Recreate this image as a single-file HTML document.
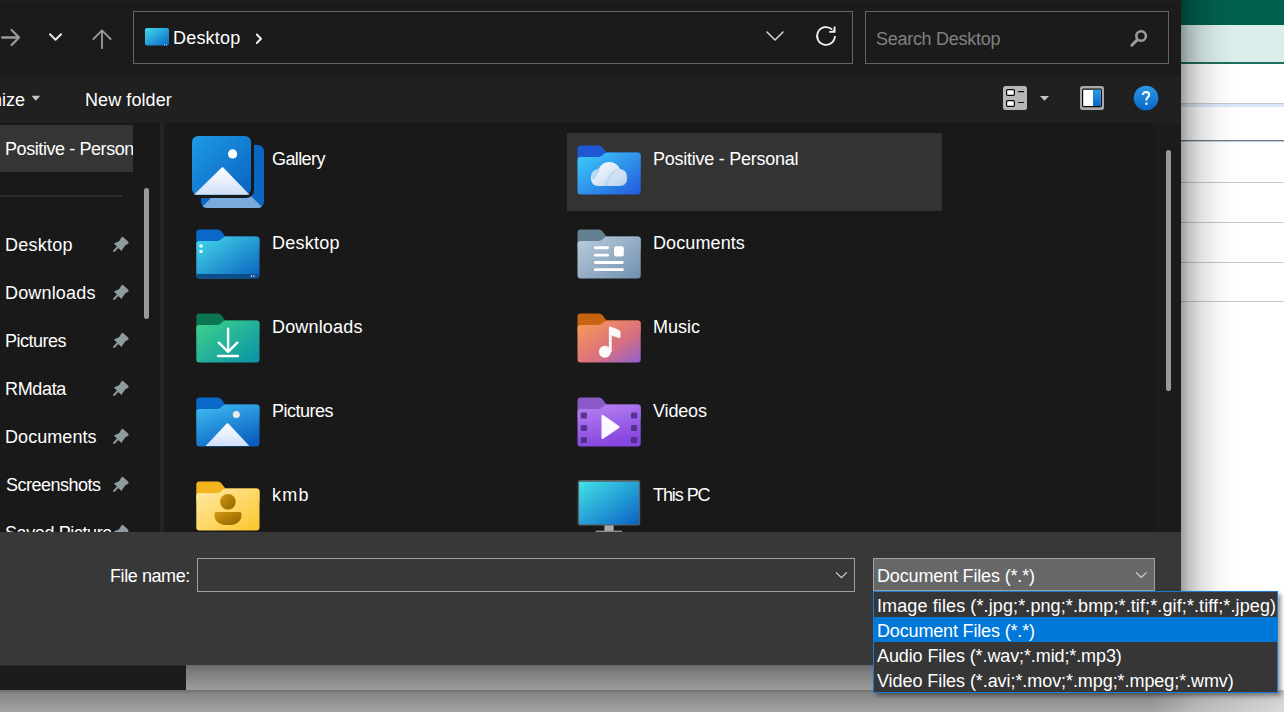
<!DOCTYPE html>
<html><head><meta charset="utf-8">
<style>
*{margin:0;padding:0;box-sizing:border-box}
html,body{width:1284px;height:712px;overflow:hidden;background:#b8b8b8;font-family:"Liberation Sans",sans-serif;}
.a{position:absolute}
.t{position:absolute;font-size:18px;line-height:20px;white-space:nowrap;color:#ffffff}
svg{position:absolute;overflow:visible}
</style></head><body>
<!-- background app at right -->
<div class="a" id="bgapp" style="left:1181px;top:0;width:103px;height:690px;background:#ffffff">
  <div class="a" style="left:0;top:0;width:103px;height:25px;background:#006150"></div>
  <div class="a" style="left:0;top:25px;width:103px;height:37px;background:#dbeeeb"></div>
  <div class="a" style="left:0;top:62px;width:103px;height:2px;background:#1f6e5f"></div>
  <div class="a" style="left:0;top:103px;width:103px;height:1px;background:#c8c8c8"></div><div class="a" style="left:0;top:104px;width:103px;height:3px;background:#d8e8f8"></div>
  <div class="a" style="left:0;top:140px;width:103px;height:1px;background:#6f7880"></div>
  <div class="a" style="left:0;top:141px;width:103px;height:1px;background:#bcd0e0"></div>
  <div class="a" style="left:0;top:182px;width:103px;height:1px;background:#c8c8c8"></div>
  <div class="a" style="left:0;top:222px;width:103px;height:1px;background:#c8c8c8"></div>
  <div class="a" style="left:0;top:262px;width:103px;height:1px;background:#c8c8c8"></div>
  <div class="a" style="left:0;top:301px;width:103px;height:1px;background:#c8c8c8"></div>
  <div class="a" style="left:0;top:0;width:60px;height:690px;background:linear-gradient(90deg,rgba(0,0,0,.38),rgba(0,0,0,.24) 8px,rgba(0,0,0,.12) 20px,rgba(0,0,0,.04) 36px,rgba(0,0,0,0) 55px)"></div>
</div>
<!-- bottom shadow strip -->
<div class="a" style="left:0;top:665px;width:1181px;height:25px;background:linear-gradient(180deg,#6a6a6a,#7c7c7c 6px,#9a9a9a 24px)"></div>
<div class="a" style="left:0;top:690px;width:1284px;height:22px;background:linear-gradient(180deg,#6e6e6e 0,#787878 1.5px,#888888 4px,#a2a2a2 22px)"></div>
<div class="a" style="left:0;top:690px;width:1284px;height:22px;background:linear-gradient(90deg,rgba(255,255,255,0) 0,rgba(255,255,255,0) 1150px,rgba(255,255,255,.3) 1200px,rgba(255,255,255,.6) 1284px)"></div>
<!-- dialog -->
<div class="a" id="dlg" style="left:0;top:0;width:1181px;height:665px;background:#191919;overflow:hidden">
  <!-- top address row -->
  <div class="a" style="left:0;top:0;width:1181px;height:75px;background:#1b1b1b"></div><div class="a" style="left:0;top:0;width:1181px;height:1px;background:#231f20"></div>
  <!-- toolbar -->
  <div class="a" style="left:0;top:75px;width:1181px;height:48px;background:#202020"></div>
  <!-- address box -->
  <div class="a" style="left:133px;top:11px;width:720px;height:53px;border:1px solid #646464"></div>
  <div class="a" style="left:865px;top:11px;width:304px;height:53px;border:1px solid #646464"></div>

  <!-- nav selected -->
  <div class="a" style="left:0;top:125px;width:133px;height:47px;background:#353535"></div>
  <div class="a" style="left:0;top:195px;width:122px;height:2px;background:#2e2e2e"></div>
  <div class="a" style="left:144px;top:188px;width:5px;height:131px;border-radius:3px;background:#9a9a9a"></div>
  <div class="a" style="left:160px;top:123px;width:4px;height:409px;background:#242424"></div><div class="a" style="left:1155px;top:123px;width:26px;height:409px;background:#1b1b1b"></div>

  <!-- content selected -->
  <div class="a" style="left:567px;top:133px;width:375px;height:78px;background:#333333;border-radius:1.5px"></div>
  <div class="a" style="left:1166px;top:150px;width:5px;height:241px;border-radius:3px;background:#9a9a9a"></div>

  <!-- bottom panel -->
  <div class="a" style="left:0;top:532px;width:1181px;height:133px;background:#383838"></div>
  <div class="a" style="left:197px;top:558px;width:658px;height:34px;border:1px solid #a0a0a0"></div>
  <div class="a" style="left:873px;top:558px;width:282px;height:33px;border:1px solid #a2a2a2;background:#676767"></div>
</div>

<div class="a" style="left:0;top:665px;width:186px;height:1px;background:#2c2c2c"></div><div class="a" style="left:0;top:666px;width:186px;height:24px;background:#1c1c1c"></div>

<!-- ICONS -->
<svg width="1284" height="712" viewBox="0 0 1284 712" style="left:0;top:0">
<defs>
  <linearGradient id="gDesk" x1="0" y1="0" x2="1" y2="1"><stop offset="0" stop-color="#46dbe8"/><stop offset="1" stop-color="#0a5fc0"/></linearGradient>
  <linearGradient id="gDl" x1="0" y1="0" x2="1" y2="1"><stop offset="0" stop-color="#40d38a"/><stop offset="1" stop-color="#0892a8"/></linearGradient>
  <linearGradient id="gPic" x1="0.2" y1="0" x2="0.7" y2="1"><stop offset="0" stop-color="#3cb8f0"/><stop offset="1" stop-color="#0a5fbe"/></linearGradient>
  <linearGradient id="gKmb" x1="0" y1="0" x2="1" y2="1"><stop offset="0" stop-color="#ffeaa6"/><stop offset="1" stop-color="#fcc52a"/></linearGradient>
  <linearGradient id="gOd" x1="0" y1="0" x2="1" y2="1"><stop offset="0" stop-color="#3ed0fa"/><stop offset="1" stop-color="#2258dc"/></linearGradient>
  <linearGradient id="gDoc" x1="0" y1="0" x2="1" y2="1"><stop offset="0" stop-color="#bccddc"/><stop offset="1" stop-color="#7090b0"/></linearGradient>
  <linearGradient id="gMus" x1="0" y1="0" x2="1" y2="1"><stop offset="0" stop-color="#fc9c55"/><stop offset=".6" stop-color="#d8707e"/><stop offset="1" stop-color="#9060d0"/></linearGradient>
  <linearGradient id="gVid" x1="0" y1="0" x2="0.3" y2="1"><stop offset="0" stop-color="#b883f2"/><stop offset="1" stop-color="#8646e0"/></linearGradient>
  <linearGradient id="gPc" x1="0" y1="0" x2="1" y2="1"><stop offset="0" stop-color="#42e2e8"/><stop offset="1" stop-color="#0a62c4"/></linearGradient>
  <linearGradient id="gGal" x1="0" y1="0" x2="1" y2="1"><stop offset="0" stop-color="#1e9ae6"/><stop offset="1" stop-color="#0a62c0"/></linearGradient>
  <linearGradient id="gMtn" x1="0" y1="0" x2="0" y2="1"><stop offset="0" stop-color="#ffffff"/><stop offset="1" stop-color="#cfe0f8"/></linearGradient>
  <linearGradient id="gCloud" x1="0" y1="0" x2="1" y2="1"><stop offset="0" stop-color="#ffffff"/><stop offset="1" stop-color="#b8cff0"/></linearGradient>
  <linearGradient id="gPerson" x1="0" y1="0" x2="1" y2="1"><stop offset="0" stop-color="#d09a10"/><stop offset="1" stop-color="#8f6200"/></linearGradient>
  <linearGradient id="gHelp" x1="0" y1="0" x2="0" y2="1"><stop offset="0" stop-color="#2a98e8"/><stop offset="1" stop-color="#0a66c6"/></linearGradient>
  <linearGradient id="gSmallDesk" x1="0" y1="0" x2="1" y2="1"><stop offset="0" stop-color="#40dcea"/><stop offset="1" stop-color="#0a66c6"/></linearGradient>
  <path id="fTab" d="M0,3 Q0,0 3,0 L21.5,0 Q23.5,0 24.8,1.5 L28.2,6 Q29,7 30.6,7 L60.2,7 Q63.2,7 63.2,10 L63.2,20 L0,20 Z"/>
  <path id="fFront" d="M0,14.6 Q0,11.6 3,11.6 L21,11.6 Q22.6,11.6 24,10.5 L27.2,7.9 Q28.4,7 30,7 L60.2,7 Q63.2,7 63.2,10 L63.2,46 Q63.2,49 60.2,49 L3,49 Q0,49 0,46 Z"/>
</defs>

<!-- top nav arrows -->
<g fill="none" stroke-linecap="round" stroke-linejoin="round">
  <path d="M2.2,37.5 H19 M11.6,30 L19,37.5 L11.6,45" stroke="#9a9a9a" stroke-width="2.3"/>
  <path d="M50,34.2 L55.5,39.7 L61,34.2" stroke="#e8e8e8" stroke-width="2"/>
  <path d="M102,30.5 V48.2 M93.4,39 L102,30.4 L110.6,39" stroke="#9a9a9a" stroke-width="1.8"/>
  <path d="M256.8,34.5 L261,38.8 L256.8,43" stroke="#f0f0f0" stroke-width="2"/>
  <path d="M767,32 L775,40 L783,32" stroke="#dadada" stroke-width="1.5"/>
  <path d="M834.9,36 A8.9,8.9 0 1 1 832.2,29.6" stroke="#f2f2f2" stroke-width="1.8" stroke-linecap="butt"/>
  <path d="M829.2,31.8 H834.6 V26.4" fill="none" stroke="#f2f2f2" stroke-width="1.8" stroke-linejoin="miter" stroke-linecap="butt"/><path d="M831.5,31.8 H834.6 V28.7 Z" fill="#f2f2f2"/>
  <circle cx="1141.1" cy="36" r="4.8" stroke="#9c9c9c" stroke-width="2.6"/>
  <path d="M1137.2,39.9 L1131.8,45.2" stroke="#9c9c9c" stroke-width="2.9"/>
</g>
<!-- small desktop icon in address -->
<rect x="145" y="28" width="24" height="17.5" rx="1.8" fill="url(#gSmallDesk)"/>
<rect x="164" y="44.3" width="1" height="1" fill="#ffffff" opacity=".8"/><rect x="166" y="44.3" width="1" height="1" fill="#ffffff" opacity=".8"/>

<!-- toolbar -->
<path d="M31.5,95.8 H40.2 L35.85,100.8 Z" fill="#c8c8c8"/>
<rect x="1003" y="86" width="24" height="24" rx="2.5" fill="#b6b6b6"/>
<rect x="1006.6" y="89.6" width="7.8" height="5.8" rx="1.2" fill="#fff" stroke="#000" stroke-width="1.2"/>
<rect x="1006.6" y="100.6" width="7.8" height="5.8" rx="1.2" fill="#fff" stroke="#000" stroke-width="1.2"/>
<path d="M1018,91.6 H1024 M1018,102.5 H1024" stroke="#111" stroke-width="1.1"/>
<path d="M1040,96 H1049 L1044.5,100.8 Z" fill="#c4c4c4"/>
<rect x="1080" y="86" width="24" height="24" rx="2.5" fill="#a8a8a8"/>
<rect x="1082.6" y="89.2" width="18.8" height="17.4" rx="1" fill="#fff" stroke="#0c0c0c" stroke-width="1.2"/>
<rect x="1093" y="89.8" width="7.8" height="16.2" fill="url(#gHelp)"/>
<circle cx="1146" cy="98" r="12.3" fill="url(#gHelp)"/>
<path d="M1142.9,95 Q1143.1,91.9 1146.1,91.9 Q1149.2,92.1 1149.2,94.8 Q1149.0,96.7 1147.3,97.7 Q1146.4,98.4 1146.4,100.6" fill="none" stroke="#fff" stroke-width="2" stroke-linecap="butt"/>
<rect x="1145.3" y="102.6" width="2.2" height="2.2" fill="#fff"/>

<!-- pins -->
<g id="pin" fill="#8f9aa1">
  <path d="M113.8,243.6 L118.6,241.6 Q119.8,240.8 120.4,238.9 Q121.4,236.4 123.4,237.3 L128,241.4 Q129.4,243.2 127.4,244.2 Q125.4,244.8 124.6,246.2 L121.4,250.9 Z"/>
  <path d="M118,247 L114,251" stroke="#8f9aa1" stroke-width="1.9" stroke-linecap="round"/>
</g>
<use href="#pin" y="48"/><use href="#pin" y="96"/><use href="#pin" y="144"/><use href="#pin" y="192"/><use href="#pin" y="240"/>
</svg>

<svg width="1284" height="712" viewBox="0 0 1284 712" style="left:0;top:0">
<defs><clipPath id="cArea"><rect x="163" y="123" width="1018" height="409"/></clipPath><clipPath id="cNav"><rect x="0" y="123" width="161" height="409"/></clipPath></defs>
<g clip-path="url(#cNav)"><use href="#pin" y="288"/></g>
<g clip-path="url(#cArea)">

<!-- Gallery -->
<clipPath id="cGalBack"><rect x="201" y="145" width="63" height="63" rx="6"/></clipPath>
<g clip-path="url(#cGalBack)">
<rect x="201" y="145" width="63" height="63" fill="#0a66c2"/>
<path d="M199,210 L232,177 L266,211 Z" fill="#78aade"/>
</g>
<rect x="189" y="133" width="65" height="65" rx="8" fill="#191919"/>
<rect x="192" y="136" width="59" height="59" rx="6" fill="url(#gGal)"/>
<path d="M194,194.8 L221.7,167.4 Q222.5,166.6 223.3,167.4 L249.5,194.8 Z" fill="url(#gMtn)"/>
<circle cx="232.6" cy="153.9" r="4.6" fill="#fff"/>

<!-- Desktop folder -->
<g transform="translate(196.3,229.4)">
  <use href="#fTab" fill="#0b68c8"/>
  <use href="#fFront" fill="url(#gDesk)"/>
  <path d="M0,44.5 H63.2 V46 Q63.2,49 60.2,49 L3,49 Q0,49 0,46 Z" fill="#0c4e8c"/>
  <rect x="3.2" y="15" width="3" height="3" fill="#fff" rx=".4"/>
  <rect x="3.2" y="20.5" width="3" height="3" fill="#fff" rx=".4"/>
  <rect x="54.5" y="46" width="1.3" height="1.3" fill="#fff"/><rect x="57" y="46" width="1.3" height="1.3" fill="#fff"/>
</g>
<!-- Downloads folder -->
<g transform="translate(196.3,313.4)">
  <use href="#fTab" fill="#0a7550"/>
  <use href="#fFront" fill="url(#gDl)"/>
  <path d="M31.8,15.3 V38 M22.5,29.3 L31.8,38.4 L41,29.3 M21.8,42.6 H41.6" fill="none" stroke="#fff" stroke-width="2.4" stroke-linecap="round" stroke-linejoin="round"/>
</g>
<!-- Pictures folder -->
<g transform="translate(196.3,397.4)">
  <use href="#fTab" fill="#0a68c8"/>
  <use href="#fFront" fill="url(#gPic)"/>
  <path d="M9.3,48.6 L30.4,26.2 Q31.2,25.4 32,26.2 L53.1,48.6 Z" fill="url(#gMtn)"/>
  <circle cx="40" cy="17.2" r="3.5" fill="#eeeae6"/>
</g>
<!-- kmb folder -->
<g transform="translate(196.3,481.4)">
  <use href="#fTab" fill="#f4b41c"/>
  <use href="#fFront" fill="url(#gKmb)"/>
  <circle cx="31.6" cy="20.4" r="7.8" fill="url(#gPerson)"/>
  <path d="M18.1,32.5 Q18.1,30.5 20.1,30.5 L43.3,30.5 Q45.3,30.5 45.3,32.5 Q45.3,43.6 31.7,43.6 Q18.1,43.6 18.1,32.5 Z" fill="url(#gPerson)"/>
</g>
<!-- OneDrive folder -->
<g transform="translate(577.5,145.5)">
  <use href="#fTab" fill="#2058d4"/>
  <use href="#fFront" fill="url(#gOd)"/>
  <path d="M21,40.4 Q13.4,40.4 13.4,32.2 Q13.6,24.6 21,23.6 Q24.6,16.4 31.6,16.4 Q39.6,16.6 42.6,23.6 Q49.7,24.6 49.7,32.4 Q49.4,40.4 42,40.4 Z" fill="url(#gCloud)"/>
  <path d="M21,23.6 Q15.5,25 14.2,30 Q14.4,34.5 17,33.5 Q20,28 22.5,25 Z" fill="#8cc4f0" opacity=".55"/>
  <path d="M25,40.4 Q29,33 32.5,28.5 Q37,23 42.6,23.6 Q36,26 33.5,32 Q31.5,37 30,40.4 Z" fill="#b4d0f0" opacity=".6"/>
</g>
<!-- Documents folder -->
<g transform="translate(577.5,229.5)">
  <use href="#fTab" fill="#62808e"/>
  <use href="#fFront" fill="url(#gDoc)"/>
  <g fill="#fff">
    <rect x="16.4" y="16.8" width="15.1" height="2.9" rx="1.4"/>
    <rect x="16.4" y="24.2" width="15.1" height="2.9" rx="1.4"/>
    <rect x="36.6" y="16.8" width="9.7" height="10.1" rx="2"/>
    <rect x="16.4" y="31.5" width="29.9" height="3" rx="1.4"/>
    <rect x="16.4" y="38.7" width="29.9" height="2.9" rx="1.4"/>
  </g>
</g>
<!-- Music folder -->
<g transform="translate(577.5,313.5)">
  <use href="#fTab" fill="#c8640f"/>
  <use href="#fFront" fill="url(#gMus)"/>
  <g fill="#fafafa">
    <circle cx="27.4" cy="38.3" r="6"/>
    <rect x="31.4" y="14" width="2.8" height="24.5"/>
    <path d="M31.4,13.6 Q31.6,12.6 32.8,13 L41.2,16.2 Q43,17 43,19.2 L43,23.4 Q43,25 41.3,24.5 L34,22 Z"/>
  </g>
</g>
<!-- Videos folder -->
<g transform="translate(577.5,397.5)">
  <use href="#fTab" fill="#8a5ac8"/>
  <use href="#fFront" fill="url(#gVid)"/>
  <g fill="#4a2c80" opacity=".85">
    <rect x="3.3" y="15.1" width="6.2" height="6" rx="1"/><rect x="3.3" y="27.4" width="6.2" height="6" rx="1"/><rect x="3.3" y="39.5" width="6.2" height="6" rx="1"/>
    <rect x="53.5" y="15.1" width="6.2" height="6" rx="1"/><rect x="53.5" y="27.4" width="6.2" height="6" rx="1"/><rect x="53.5" y="39.5" width="6.2" height="6" rx="1"/>
  </g>
  <path d="M24,18.4 Q24,16.6 25.6,17.5 L41.6,28.4 Q43,29.5 41.6,30.5 L25.6,41.2 Q24,42.2 24,40.2 Z" fill="#fbf8ff"/>
</g>
<!-- This PC -->
<rect x="604.4" y="525" width="9.3" height="6" fill="#a8acb0"/>
<rect x="595.6" y="530.6" width="26.4" height="2" fill="#8a8e92"/>
<rect x="577.7" y="480" width="62.5" height="45.6" rx="2.4" fill="#5c5c5c"/>
<rect x="579" y="481.8" width="60" height="42.6" rx="1.4" fill="url(#gPc)"/>
</g>

<!-- file name chevron & filter chevron -->
<path d="M836,572.4 L841.4,577.6 L846.8,572.4" fill="none" stroke="#d4d4d4" stroke-width="1.2"/>
<path d="M1136,572.4 L1141.3,577.4 L1146.6,572.4" fill="none" stroke="#d4d4d4" stroke-width="1.2"/>
</svg>

<!-- dropdown list -->
<div class="a" style="left:873px;top:591px;width:405px;height:102px;border:1px solid #1a78d6;background:#363636;box-shadow:3px 3px 4px rgba(0,0,0,.38)">
  <div class="a" style="left:0;top:25px;width:403px;height:25px;background:#0078d7"></div>
</div>

<!-- texts -->
<div class="t" style="left:173px;top:28px;letter-spacing:0.2px">Desktop</div>
<div class="t" style="left:876px;top:29px;color:#808080;letter-spacing:-0.28px">Search Desktop</div>
<div class="t" style="left:-8px;top:90px">nize</div>
<div class="t" style="left:85px;top:90px;letter-spacing:0.08px">New folder</div>

<div class="a" style="left:0;top:125px;width:133px;height:47px;overflow:hidden">
  <div class="t" style="left:5px;top:14px;letter-spacing:-0.42px">Positive - Personal</div>
</div>
<div class="a" style="left:0;top:123px;width:161px;height:409px;overflow:hidden">
<div class="t" style="left:5px;top:112px;letter-spacing:0.25px">Desktop</div>
<div class="t" style="left:5px;top:160px;letter-spacing:0.17px">Downloads</div>
<div class="t" style="left:5px;top:208px;letter-spacing:-0.5px">Pictures</div>
<div class="t" style="left:5px;top:256px;letter-spacing:-0.34px">RMdata</div>
<div class="t" style="left:5px;top:304px;letter-spacing:0.06px">Documents</div>
<div class="t" style="left:6px;top:352px;letter-spacing:-0.5px">Screenshots</div>
<div class="a" style="left:0;top:0;width:111px;height:409px;overflow:hidden"><div class="t" style="left:5px;top:400px;letter-spacing:-0.4px">Saved Pictures</div></div>

</div>
<div class="t" style="left:272px;top:149px;letter-spacing:-0.6px">Gallery</div>
<div class="t" style="left:272px;top:233px;letter-spacing:0.25px">Desktop</div>
<div class="t" style="left:272px;top:317px;letter-spacing:0.17px">Downloads</div>
<div class="t" style="left:272px;top:401px;letter-spacing:-0.5px">Pictures</div>
<div class="t" style="left:272px;top:485px;letter-spacing:1.2px">kmb</div>
<div class="t" style="left:653px;top:149px;letter-spacing:-0.26px">Positive - Personal</div>
<div class="t" style="left:653px;top:233px;letter-spacing:0.1px">Documents</div>
<div class="t" style="left:653px;top:317px">Music</div>
<div class="t" style="left:653px;top:401px;letter-spacing:-0.15px">Videos</div>
<div class="t" style="left:653px;top:485px;letter-spacing:-1.07px">This PC</div>

<div class="t" style="left:110px;top:566px;letter-spacing:-0.42px">File name:</div>
<div class="t" style="left:877px;top:566px;letter-spacing:-0.16px">Document Files (*.*)</div>
<div class="t" style="left:877px;top:596px;letter-spacing:0.11px">Image files (*.jpg;*.png;*.bmp;*.tif;*.gif;*.tiff;*.jpeg)</div>
<div class="t" style="left:877px;top:621px;letter-spacing:-0.16px">Document Files (*.*)</div>
<div class="t" style="left:877px;top:646px;letter-spacing:-0.11px">Audio Files (*.wav;*.mid;*.mp3)</div>
<div class="t" style="left:877px;top:671px;letter-spacing:-0.07px">Video Files (*.avi;*.mov;*.mpg;*.mpeg;*.wmv)</div>
</body></html>
